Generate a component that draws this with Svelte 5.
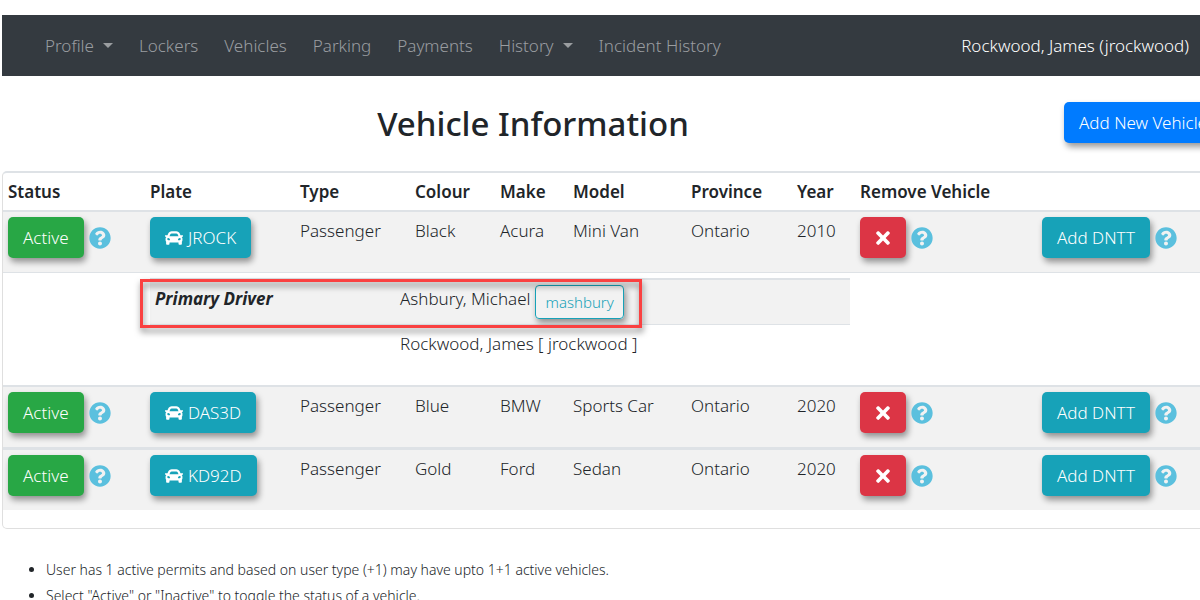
<script lang="ts">
  type Vehicle = {
    plate: string;
    type: string;
    colour: string;
    make: string;
    model: string;
    province: string;
    year: number;
    drivers?: boolean;
  };

  const navItems = [
    { label: 'Profile', dropdown: true },
    { label: 'Lockers' },
    { label: 'Vehicles' },
    { label: 'Parking' },
    { label: 'Payments' },
    { label: 'History', dropdown: true },
    { label: 'Incident History' }
  ];

  const columns = [
    { label: 'Status', width: 142 },
    { label: 'Plate', width: 150 },
    { label: 'Type', width: 115 },
    { label: 'Colour', width: 85 },
    { label: 'Make', width: 73 },
    { label: 'Model', width: 118 },
    { label: 'Province', width: 106 },
    { label: 'Year', width: 63 },
    { label: 'Remove Vehicle', width: 182 },
    { label: '', width: 203 }
  ];

  const vehicles: Vehicle[] = [
    { plate: 'JROCK', type: 'Passenger', colour: 'Black', make: 'Acura', model: 'Mini Van', province: 'Ontario', year: 2010, drivers: true },
    { plate: 'DAS3D', type: 'Passenger', colour: 'Blue', make: 'BMW', model: 'Sports Car', province: 'Ontario', year: 2020 },
    { plate: 'KD92D', type: 'Passenger', colour: 'Gold', make: 'Ford', model: 'Sedan', province: 'Ontario', year: 2020 }
  ];
</script>

{#snippet help(label: string)}
  <button class="help" aria-label={label}>
    <svg viewBox="0 0 512 512" aria-hidden="true">
      <path d="M504 256c0 136.997-111.043 248-248 248S8 392.997 8 256C8 119.083 119.043 8 256 8s248 111.083 248 248zM262.655 90c-54.497 0-89.255 22.957-116.549 63.758-3.536 5.286-2.353 12.415 2.715 16.258l34.699 26.31c5.205 3.947 12.621 3.008 16.665-2.122 17.864-22.658 30.113-35.797 57.303-35.797 20.429 0 45.698 13.148 45.698 32.958 0 14.976-12.363 22.667-32.534 33.976C247.128 238.528 216 254.941 216 296v4c0 6.627 5.373 12 12 12h56c6.627 0 12-5.373 12-12v-1.333c0-28.462 83.186-29.647 83.186-106.667 0-58.002-60.165-102-116.531-102zM256 338c-25.365 0-46 20.635-46 46 0 25.364 20.635 46 46 46s46-20.636 46-46c0-25.365-20.635-46-46-46z" />
    </svg>
  </button>
{/snippet}

<div class="page">
  <nav class="navbar">
    <ul class="nav-list">
      {#each navItems as item}
        <li><a href="#top" class:dropdown={item.dropdown}>{item.label}</a></li>
      {/each}
    </ul>
    <span class="nav-user">Rockwood, James (jrockwood)</span>
  </nav>

  <main class="content">
    <header class="title-row">
      <h2>Vehicle Information</h2>
      <button class="btn btn-primary">Add New Vehicle</button>
    </header>

    <section class="card">
      <table class="vehicles">
        <colgroup>
          {#each columns as column}
            <col style="width: {column.width}px" />
          {/each}
        </colgroup>
        <thead>
          <tr>
            {#each columns as column}
              <th>{column.label}</th>
            {/each}
          </tr>
        </thead>
        <tbody>
          {#each vehicles as vehicle}
            <tr class="vehicle">
              <td>
                <div class="actions">
                  <button class="btn btn-success">Active</button>
                  {@render help('Status help')}
                </div>
              </td>
              <td>
                <button class="btn btn-info">
                  <svg class="car" viewBox="0 0 512 512" aria-hidden="true">
                    <path d="M499.99 176h-59.87l-16.64-41.6C406.38 91.63 365.57 64 319.5 64h-127c-46.06 0-86.88 27.63-103.99 70.4L71.87 176H12.01C4.2 176-1.53 183.34.37 190.91l6 24C7.7 220.25 12.5 224 18.01 224h20.07C24.65 235.73 16 252.78 16 272v48c0 16.12 6.16 30.67 16 41.93V416c0 17.67 14.33 32 32 32h32c17.67 0 32-14.33 32-32v-32h256v32c0 17.67 14.33 32 32 32h32c17.67 0 32-14.33 32-32v-54.07c9.84-11.25 16-25.8 16-41.93v-48c0-19.22-8.65-36.27-22.07-48H494c5.51 0 10.31-3.75 11.64-9.09l6-24c1.89-7.57-3.84-14.91-11.65-14.91zm-352.06-17.83c7.29-18.22 24.94-30.17 44.57-30.17h127c19.63 0 37.28 11.95 44.57 30.17L384 208H128l19.93-49.83zM96 319.8c-19.2 0-32-12.76-32-31.9S76.8 256 96 256s48 28.71 48 47.85-28.8 15.95-48 15.95zm320 0c-19.2 0-48 3.19-48-15.95S396.8 256 416 256s32 12.76 32 31.9-12.8 31.9-32 31.9z" />
                  </svg>
                  {vehicle.plate}
                </button>
              </td>
              <td>{vehicle.type}</td>
              <td>{vehicle.colour}</td>
              <td>{vehicle.make}</td>
              <td>{vehicle.model}</td>
              <td>{vehicle.province}</td>
              <td>{vehicle.year}</td>
              <td>
                <div class="actions">
                  <button class="btn btn-danger" aria-label="Remove {vehicle.plate}">
                    <svg class="times" viewBox="0 0 352 512" aria-hidden="true">
                      <path d="M242.72 256l100.07-100.07c12.28-12.28 12.28-32.19 0-44.48l-22.24-22.24c-12.28-12.28-32.19-12.28-44.48 0L176 189.28 75.93 89.21c-12.28-12.28-32.19-12.28-44.48 0L9.21 111.45c-12.28 12.28-12.28 32.19 0 44.48L109.28 256 9.21 356.07c-12.28 12.28-12.28 32.19 0 44.48l22.24 22.24c12.28 12.28 32.2 12.28 44.48 0L176 322.72l100.07 100.07c12.28 12.28 32.2 12.28 44.48 0l22.24-22.24c12.28-12.28 12.28-32.19 0-44.48L242.72 256z" />
                    </svg>
                  </button>
                  {@render help('Remove vehicle help')}
                </div>
              </td>
              <td>
                <div class="actions">
                  <button class="btn btn-info">Add DNTT</button>
                  {@render help('DNTT help')}
                </div>
              </td>
            </tr>
            {#if vehicle.drivers}
              <tr>
                <td></td>
                <td colspan="7">
                  <div class="drivers-wrap">
                    <table class="drivers">
                      <tbody>
                        <tr class="primary">
                          <th scope="row">Primary Driver</th>
                          <td>
                            <div class="driver">
                              Ashbury, Michael
                              <button class="btn btn-outline">mashbury</button>
                            </div>
                          </td>
                        </tr>
                        <tr>
                          <td></td>
                          <td>Rockwood, James [ jrockwood ]</td>
                        </tr>
                      </tbody>
                    </table>
                    <div class="highlight"></div>
                  </div>
                </td>
                <td colspan="2"></td>
              </tr>
            {/if}
          {/each}
        </tbody>
      </table>
    </section>

    <ul class="notes">
      <li>User has 1 active permits and based on user type (+1) may have upto 1+1 active vehicles.</li>
      <li>Select "Active" or "Inactive" to toggle the status of a vehicle.</li>
    </ul>
  </main>
</div>

<style>
  :global(body) {
    overflow: hidden;
    background: #fff;
  }

  .page {
    box-sizing: border-box;
    padding: 15px 0 0 2px;
    font-family: 'Noto Sans', 'Open Sans', sans-serif;
    font-size: 17px;
    font-weight: 300;
    line-height: 27px;
    color: #212529;
  }

  .navbar {
    display: flex;
    align-items: center;
    justify-content: space-between;
    padding: 17px 11px 17px 43px;
    background: #343a40;
  }

  .nav-list {
    display: flex;
    gap: 26px;
    margin: 0;
    padding: 0;
    list-style: none;
  }

  .nav-list a {
    color: #9a9da0;
    text-decoration: none;
  }

  .dropdown::after {
    content: '';
    display: inline-block;
    margin-left: 9px;
    vertical-align: 4px;
    border-top: 5px solid;
    border-right: 5px solid transparent;
    border-left: 5px solid transparent;
  }

  .nav-user {
    color: #fff;
  }

  /* The vehicle table runs past the right edge of the window */
  .content {
    margin-right: -40px;
  }

  .title-row {
    display: flex;
    align-items: flex-start;
    padding: 26px 18px 25px 0;
  }

  h2 {
    flex: 1;
    margin: 0;
    font-size: 33px;
    font-weight: 500;
    line-height: 44px;
    text-align: center;
  }

  .btn {
    display: inline-flex;
    align-items: center;
    justify-content: center;
    height: 41px;
    padding: 0 14px;
    border: 1px solid transparent;
    border-radius: 5px;
    font: inherit;
    color: #fff;
    white-space: nowrap;
    box-shadow: 2px 4px 6px rgba(0, 0, 0, 0.4);
    cursor: pointer;
  }

  .btn-primary {
    background: #007bff;
  }

  .btn-success {
    background: #28a745;
  }

  .btn-info {
    background: #17a2b8;
  }

  .btn-danger {
    padding: 0 15px;
    background: #dc3545;
  }

  .btn-outline {
    height: 34px;
    padding: 0 9px;
    border-color: #17a2b8;
    border-radius: 4px;
    background: transparent;
    font-size: 15px;
    color: #17a2b8;
  }

  .btn svg {
    fill: currentColor;
  }

  .car {
    width: 18px;
    height: 18px;
    margin-right: 5px;
  }

  .times {
    width: 14px;
    height: 20px;
  }

  .actions {
    display: flex;
    align-items: center;
    gap: 5px;
  }

  .help {
    display: flex;
    padding: 0;
    border: none;
    background: none;
    cursor: pointer;
  }

  .help svg {
    width: 22px;
    height: 22px;
    fill: #5bc0de;
  }

  .card {
    padding-bottom: 18px;
    border: 1px solid #dfdfdf;
    border-top: 2px solid #dee2e6;
    border-radius: 5px;
  }

  table {
    width: 100%;
    border-collapse: separate;
    border-spacing: 0;
    table-layout: fixed;
  }

  th,
  td {
    padding: 5px;
    text-align: left;
    vertical-align: top;
    white-space: nowrap;
  }

  thead th {
    font-weight: 600;
  }

  .vehicle > td {
    padding-bottom: 14px;
    border-top: 2px solid #dee2e6;
    border-bottom: 1px solid #dee2e6;
    background: #f2f2f2;
  }

  .vehicle:last-child > td {
    border-bottom: none;
  }

  .drivers-wrap {
    position: relative;
    padding-bottom: 18px;
  }

  .drivers th {
    width: 235px;
    font-style: italic;
  }

  .primary > * {
    border-top: 2px solid #dee2e6;
    border-bottom: 1px solid #dee2e6;
    background: #f2f2f2;
  }

  .driver {
    display: flex;
    gap: 5px;
  }

  .highlight {
    position: absolute;
    top: 1px;
    left: -10px;
    box-sizing: border-box;
    width: 502px;
    height: 49px;
    border: 3px solid #fa4141;
    filter: drop-shadow(1px 4px 3px rgba(0, 0, 0, 0.5));
    pointer-events: none;
  }

  .notes {
    margin: 28px 0 0;
    padding-left: 44px;
    font-size: 14px;
    line-height: 26px;
  }
</style>
